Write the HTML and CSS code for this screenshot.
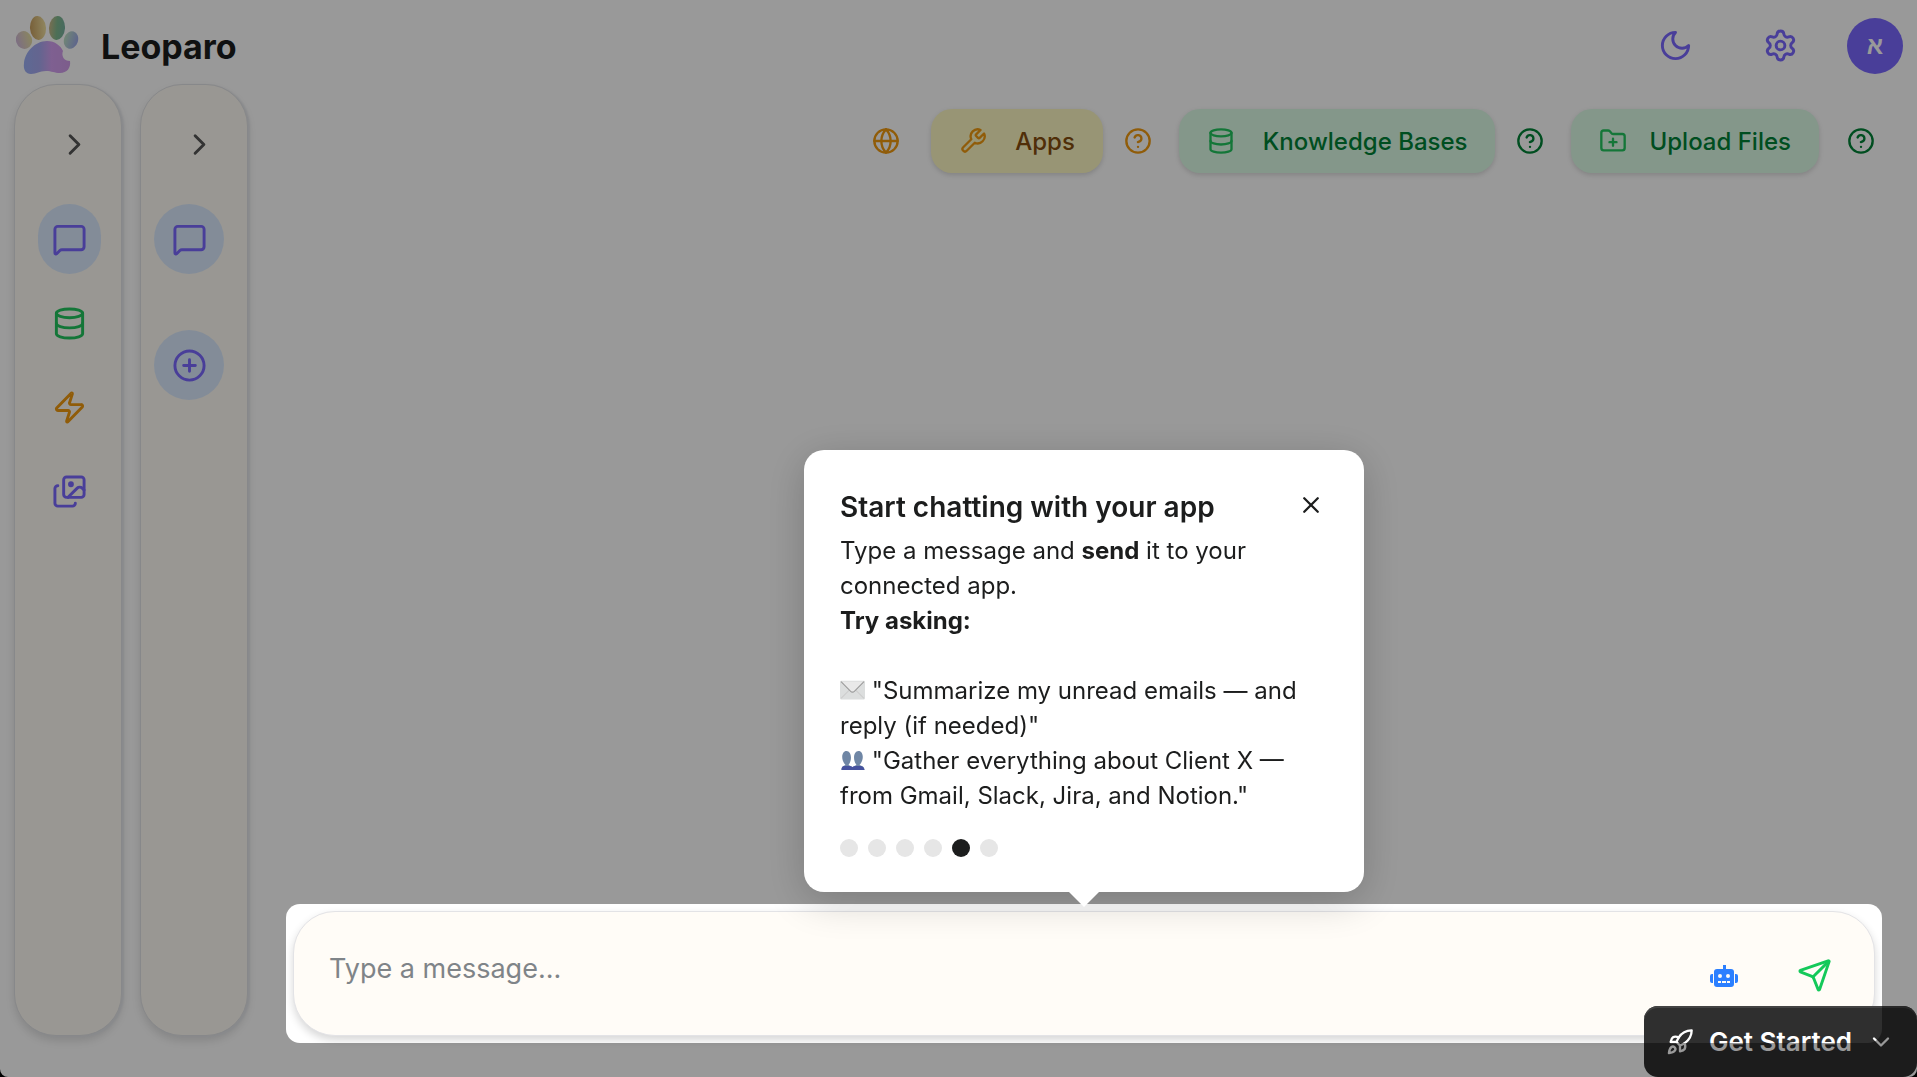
FILE: index.html
```html
<!DOCTYPE html>
<html lang="en">
<head>
<meta charset="utf-8">
<title>Leoparo</title>
<link rel="stylesheet" href="styles.css">
</head>
<body>

<!-- shared icon shapes -->
<svg class="sprite" aria-hidden="true">
	<symbol id="i-chevron" viewBox="0 0 24 24"><path d="m9 18 6-6-6-6"/></symbol>
	<symbol id="i-down" viewBox="0 0 24 24"><path d="m6 9 6 6 6-6"/></symbol>
	<symbol id="i-message" viewBox="0 0 24 24"><path d="M22 17a2 2 0 0 1-2 2H6.828a2 2 0 0 0-1.414.586l-2.202 2.202A.71.71 0 0 1 2 21.286V5a2 2 0 0 1 2-2h16a2 2 0 0 1 2 2z"/></symbol>
	<symbol id="i-database" viewBox="0 0 24 24"><ellipse cx="12" cy="5" rx="9" ry="3"/><path d="M3 5v14a9 3 0 0 0 18 0V5"/><path d="M3 12a9 3 0 0 0 18 0"/></symbol>
	<symbol id="i-zap" viewBox="0 0 24 24"><path d="M4 14a1 1 0 0 1-.78-1.63l9.9-10.2a.5.5 0 0 1 .86.46l-1.92 6.02A1 1 0 0 0 13 10h7a1 1 0 0 1 .78 1.63l-9.9 10.2a.5.5 0 0 1-.86-.46l1.92-6.02A1 1 0 0 0 11 14z"/></symbol>
	<symbol id="i-images" viewBox="0 0 24 24"><path d="m22 11-1.296-1.296a2.4 2.4 0 0 0-3.408 0L11 16"/><path d="M4 8a2 2 0 0 0-2 2v10a2 2 0 0 0 2 2h10a2 2 0 0 0 2-2"/><circle cx="13" cy="7" r="1"/><rect x="8" y="2" width="14" height="14" rx="2"/></symbol>
	<symbol id="i-plus" viewBox="0 0 24 24"><circle cx="12" cy="12" r="10"/><path d="M8 12h8M12 8v8"/></symbol>
	<symbol id="i-globe" viewBox="0 0 24 24"><circle cx="12" cy="12" r="10"/><path d="M12 2a14.5 14.5 0 0 0 0 20 14.5 14.5 0 0 0 0-20M2 12h20"/></symbol>
	<symbol id="i-help" viewBox="0 0 24 24"><circle cx="12" cy="12" r="10"/><path d="M9.09 9a3 3 0 0 1 5.83 1c0 2-3 3-3 3M12 17h.01"/></symbol>
	<symbol id="i-wrench" viewBox="0 0 24 24"><path d="M14.7 6.3a1 1 0 0 0 0 1.4l1.6 1.6a1 1 0 0 0 1.4 0l3.77-3.77a6 6 0 0 1-7.94 7.94l-6.91 6.91a2.12 2.12 0 0 1-3-3l6.91-6.91a6 6 0 0 1 7.94-7.94l-3.76 3.76z"/></symbol>
	<symbol id="i-folder" viewBox="0 0 24 24"><path d="M12 10v6M9 13h6"/><path d="M20 20a2 2 0 0 0 2-2V8a2 2 0 0 0-2-2h-7.9a2 2 0 0 1-1.69-.9L9.6 3.9A2 2 0 0 0 7.93 3H4a2 2 0 0 0-2 2v13a2 2 0 0 0 2 2Z"/></symbol>
	<symbol id="i-moon" viewBox="0 0 24 24"><path d="M12 3a6 6 0 0 0 9 9 9 9 0 1 1-9-9Z"/></symbol>
	<symbol id="i-gear" viewBox="0 0 24 24"><path d="M9.671 4.136a2.34 2.34 0 0 1 4.659 0 2.34 2.34 0 0 0 3.319 1.915 2.34 2.34 0 0 1 2.33 4.033 2.34 2.34 0 0 0 0 3.831 2.34 2.34 0 0 1-2.33 4.033 2.34 2.34 0 0 0-3.319 1.915 2.34 2.34 0 0 1-4.659 0 2.34 2.34 0 0 0-3.32-1.915 2.34 2.34 0 0 1-2.33-4.033 2.34 2.34 0 0 0 0-3.831A2.34 2.34 0 0 1 6.35 6.051a2.34 2.34 0 0 0 3.319-1.915"/><circle cx="12" cy="12" r="3"/></symbol>
	<symbol id="i-send" viewBox="0 0 24 24"><path d="M14.536 21.686a.5.5 0 0 0 .937-.024l6.5-19a.496.496 0 0 0-.635-.635l-19 6.5a.5.5 0 0 0-.024.937l7.93 3.18a2 2 0 0 1 1.112 1.11z"/><path d="m21.854 2.147-10.94 10.939"/></symbol>
	<symbol id="i-rocket" viewBox="0 0 24 24"><path d="M4.5 16.5c-1.5 1.26-2 5-2 5s3.74-.5 5-2c.71-.84.7-2.13-.09-2.91a2.18 2.18 0 0 0-2.91-.09z"/><path d="m12 15-3-3a22 22 0 0 1 2-3.95A12.88 12.88 0 0 1 22 2c0 2.72-.78 7.5-6 11a22.35 22.35 0 0 1-4 2z"/><path d="M9 12H4s.55-3.03 2-4c1.62-1.08 5 0 5 0M12 15v5s3.03-.55 4-2c1.08-1.62 0-5 0-5"/></symbol>
	<symbol id="i-close" viewBox="0 0 24 24"><path d="M3 3l18 18M21 3 3 21"/></symbol>
</svg>

<div class="app">
	<header class="header">
		<svg class="logo" viewBox="0 0 64 60" role="img" aria-label="Leoparo logo">
			<defs>
				<linearGradient id="pad" x1="0" x2="1"><stop offset="0" stop-color="#9bb0f5"/><stop offset=".35" stop-color="#a8a8f0"/><stop offset=".6" stop-color="#d4a0f2"/><stop offset="1" stop-color="#cf9be8"/></linearGradient>
				<linearGradient id="toe1" x1="0" x2="1"><stop offset="0" stop-color="#d0b8da"/><stop offset="1" stop-color="#e6dfa0"/></linearGradient>
				<linearGradient id="toe2" x1="0" x2="1"><stop offset="0" stop-color="#c8a060"/><stop offset="1" stop-color="#f0e0a0"/></linearGradient>
				<linearGradient id="toe3" x1="0" x2="1"><stop offset="0" stop-color="#c8b888"/><stop offset=".5" stop-color="#80ba90"/><stop offset="1" stop-color="#78b0a0"/></linearGradient>
				<linearGradient id="toe4" x1="0" x2="1"><stop offset="0" stop-color="#bce0c4"/><stop offset="1" stop-color="#9ca8ea"/></linearGradient>
			</defs>
			<ellipse cx="8" cy="24" rx="8" ry="9" transform="rotate(-18 8 24)" fill="url(#toe1)"/>
			<ellipse cx="22" cy="12" rx="8" ry="12" transform="rotate(-4 22 12)" fill="url(#toe2)"/>
			<ellipse cx="41" cy="12" rx="8" ry="12" transform="rotate(4 41 12)" fill="url(#toe3)"/>
			<ellipse cx="55" cy="24" rx="7" ry="9" transform="rotate(18 55 24)" fill="url(#toe4)"/>
			<path fill="url(#pad)" d="M31 25c8 0 14 5 16 10-2 5 1 10 7 10 1 7-3 12-10 12-6 0-8-2-14-2-7 0-9 3-15 3-5 0-8-4-7-11C9 36 19 25 31 25z"/>
		</svg>
		<h1 class="brand">Leoparo</h1>
		<div class="header-actions">
			<button class="icon-btn violet" aria-label="Dark mode"><svg class="icon"><use href="#i-moon"/></svg></button>
			<button class="icon-btn violet" aria-label="Settings"><svg class="icon"><use href="#i-gear"/></svg></button>
			<button class="avatar" aria-label="Account">א</button>
		</div>
	</header>

	<div class="layout">
		<nav class="rail rail-sections" aria-label="Sections">
			<button class="rail-toggle" aria-label="Expand"><svg class="icon"><use href="#i-chevron"/></svg></button>
			<button class="rail-btn violet active" aria-label="Chats"><svg class="icon"><use href="#i-message"/></svg></button>
			<button class="rail-btn green" aria-label="Knowledge bases"><svg class="icon"><use href="#i-database"/></svg></button>
			<button class="rail-btn amber" aria-label="Automations"><svg class="icon"><use href="#i-zap"/></svg></button>
			<button class="rail-btn violet" aria-label="Gallery"><svg class="icon"><use href="#i-images"/></svg></button>
		</nav>
		<nav class="rail" aria-label="Conversations">
			<button class="rail-toggle" aria-label="Expand"><svg class="icon"><use href="#i-chevron"/></svg></button>
			<button class="round-btn violet" aria-label="Conversation"><svg class="icon"><use href="#i-message"/></svg></button>
			<button class="round-btn violet" aria-label="New conversation"><svg class="icon"><use href="#i-plus"/></svg></button>
		</nav>

		<main class="main">
			<div class="toolbar">
				<button class="icon-btn amber" aria-label="Web search"><svg class="icon small"><use href="#i-globe"/></svg></button>
				<div class="tool">
					<button class="pill pill-apps"><svg class="icon small"><use href="#i-wrench"/></svg>Apps</button>
					<button class="icon-btn amber" aria-label="About apps"><svg class="icon small"><use href="#i-help"/></svg></button>
				</div>
				<div class="tool">
					<button class="pill pill-green"><svg class="icon small"><use href="#i-database"/></svg>Knowledge Bases</button>
					<button class="icon-btn forest" aria-label="About knowledge bases"><svg class="icon small"><use href="#i-help"/></svg></button>
				</div>
				<div class="tool tool-upload">
					<button class="pill pill-green"><svg class="icon small"><use href="#i-folder"/></svg>Upload Files</button>
					<button class="icon-btn forest" aria-label="About uploads"><svg class="icon small"><use href="#i-help"/></svg></button>
				</div>
			</div>

			<div class="composer-wrap">
				<form class="composer">
					<input class="composer-input" type="text" placeholder="Type a message..." aria-label="Message">
					<button class="icon-btn" type="button" aria-label="Choose agent">
						<svg class="robot" viewBox="0 0 28 22">
							<path fill-rule="evenodd" d="M13 0h3v4h5a3 3 0 0 1 3 3v12a3 3 0 0 1-3 3H7a3 3 0 0 1-3-3V7a3 3 0 0 1 3-3h6zM8 11a2 2 0 1 0 4 0 2 2 0 0 0-4 0zm8 0a2 2 0 1 0 4 0 2 2 0 0 0-4 0zm-8 5v2h3v-2zm4 0v2h4v-2zm5 0v2h3v-2zM3 9v9H2a2 2 0 0 1-2-2v-5a2 2 0 0 1 2-2zm22 0h1a2 2 0 0 1 2 2v5a2 2 0 0 1-2 2h-1z"/>
						</svg>
					</button>
					<button class="icon-btn send" type="submit" aria-label="Send"><svg class="icon"><use href="#i-send"/></svg></button>
				</form>
				<div class="spotlight"></div>

				<section class="tour" role="dialog" aria-labelledby="tour-title">
					<div class="tour-head">
						<h2 id="tour-title">Start chatting with your app</h2>
						<button class="tour-close" aria-label="Close"><svg class="icon"><use href="#i-close"/></svg></button>
					</div>
					<p>Type a message and <b>send</b> it to your connected app.</p>
					<p class="tour-ask"><b>Try asking:</b></p>
					<p><svg class="emoji" viewBox="0 0 24 18" role="img" aria-label="Envelope"><rect width="24" height="18" rx="1" fill="#dcdede"/><path d="M1 17 9 9M23 17l-8-8" stroke="#ccc" fill="none"/><path d="m1 1 9 9q2 2 4 0l9-9" stroke="#9a9a9a" fill="#e9e9e9"/></svg>
					"Summarize my unread emails — and reply (if needed)"</p>
					<p><svg class="emoji" viewBox="0 0 24 20" role="img" aria-label="People"><path d="M1 20c0-4 2-4 4-5-5-5-4-14 1-14s6 9 2 14c2 1 4 1 4 5z" fill="#6f86a5"/><path d="M12 20c0-4 2-4 4-5-4-5-3-14 2-14s6 9 1 14c2 1 5 1 5 5z" fill="#6f86a5"/><path d="M1 20q0-4 3-4h5q2 0 3 1 1-1 3-1h5q3 0 4 4z" fill="#46529e"/></svg>
					"Gather everything about Client X — from Gmail, Slack, Jira, and Notion."</p>
					<div class="dots">
						<span></span><span></span><span></span><span></span><span class="on"></span><span></span>
					</div>
				</section>
			</div>
		</main>
	</div>
</div>

<button class="get-started"><svg class="icon"><use href="#i-rocket"/></svg>Get Started<svg class="icon"><use href="#i-down"/></svg></button>

</body>
</html>
```
FILE: styles.css
```css
* {
	box-sizing: border-box;
}
html {
	background: #000;
}
body {
	margin: 0;
	overflow: hidden;
	font-family: Inter, "Liberation Sans", sans-serif;
	font-size: 24px;
	color: #1c1d1d;
}
button {
	border: 0;
	padding: 0;
	background: none;
	font: inherit;
	color: inherit;
	cursor: pointer;
}
h1, h2, p {
	margin: 0;
}
.sprite {
	position: absolute;
	width: 0;
	height: 0;
}
.icon {
	display: block;
	flex: none;
	width: 35px;
	height: 35px;
	fill: none;
	stroke: currentColor;
	stroke-width: 2;
	stroke-linecap: round;
	stroke-linejoin: round;
}
.icon.small {
	width: 28px;
	height: 28px;
}
.violet { color: #7a68ff; }
.green { color: #22c55e; }
.amber { color: #f09a10; }
.forest { color: #008236; }

.app {
	display: flex;
	flex-direction: column;
	height: 100vh;
	background: #fff;
	border-radius: 0 0 8px 8px;
}

/* header */
.header {
	display: flex;
	align-items: center;
	height: 84px;
	padding: 7px 14px 0 16px;
}
.header-actions {
	display: flex;
	align-items: center;
	margin-left: auto;
}
.header-actions .icon-btn + .icon-btn {
	margin-left: 70px;
}
.logo {
	width: 64px;
	height: 60px;
}
.brand {
	margin-left: 21px;
	padding-top: 3px;
	font-size: 34px;
	line-height: 40px;
	font-weight: 700;
}
.avatar {
	width: 56px;
	height: 56px;
	margin-left: 49px;
	border-radius: 50%;
	background: #7a68ff;
	color: #fff;
	font-size: 24px;
	font-weight: 600;
}

/* side rails */
.layout {
	display: flex;
	flex: 1;
	gap: 18px;
	min-height: 0;
	padding: 0 42px 41px 14px;
}
.rail {
	display: flex;
	flex-direction: column;
	align-items: center;
	gap: 14px;
	width: 108px;
	padding-top: 42px;
	border: 1px solid #e2e3e6;
	border-radius: 42px;
	background: #fffcf5;
	box-shadow: 2px 1px 2px #e4e6ea, 0 5px 8px rgba(0, 0, 0, .12);
}
.rail-sections {
	padding-left: 2px;
}
.rail-toggle {
	margin: 0 0 28px 10px;
	color: #555;
}
.rail-btn,
.round-btn {
	display: flex;
	align-items: center;
	justify-content: center;
	width: 63px;
	height: 70px;
	border-radius: 35px;
}
.round-btn {
	width: 70px;
	margin-right: 10px;
}
.rail-btn.active,
.round-btn {
	background: #dbeafe;
}
.round-btn + .round-btn {
	margin-top: 42px;
}

/* toolbar */
.main {
	display: flex;
	flex-direction: column;
	justify-content: space-between;
	flex: 1;
	margin-left: 27px;
}
.toolbar {
	display: flex;
	align-items: center;
	justify-content: flex-end;
	gap: 27px;
	padding-top: 25px;
}
.toolbar > .icon-btn {
	margin-right: 4px;
}
.tool {
	display: flex;
	align-items: center;
	gap: 21px;
}
.tool-upload {
	gap: 28px;
}
.pill {
	display: flex;
	align-items: center;
	gap: 28px;
	height: 64px;
	padding: 0 28px;
	border-radius: 21px;
	font-weight: 500;
	box-shadow: 0 2px 5px rgba(0, 0, 0, .15);
}
.tool-upload .pill {
	gap: 22px;
}
.pill-apps {
	background: #fef9c3;
	color: #854d0e;
}
.pill-apps .icon {
	color: #f09a10;
}
.pill-green {
	background: #dcfce7;
	color: #008236;
}
.pill-green .icon {
	color: #22c55e;
}

/* message box */
.composer-wrap {
	position: relative;
}
.composer {
	display: flex;
	align-items: center;
	height: 125px;
	padding: 4px 42px 0 35px;
	border: 1px solid #e3e3e6;
	border-radius: 42px;
	background: #fffcf7;
	box-shadow: 0 4px 8px rgba(0, 0, 0, .16);
}
.composer-input {
	flex: 1;
	min-width: 0;
	height: 56px;
	margin-bottom: 14px;
	padding: 0;
	border: 0;
	outline: 0;
	background: none;
	font: inherit;
	font-size: 27px;
}
.composer-input::placeholder {
	color: #7f8488;
}
.robot {
	display: block;
	width: 28px;
	height: 22px;
	fill: #2b7fff;
}
.send {
	margin-left: 59px;
	color: #14c95a;
}

/* dims the page round the highlighted element */
.spotlight {
	position: absolute;
	inset: -7px;
	z-index: 10;
	border-radius: 14px;
	box-shadow: 0 0 0 3000px rgba(0, 0, 0, .4);
	pointer-events: none;
}
.tour {
	position: absolute;
	z-index: 20;
	bottom: calc(100% + 19px);
	left: 50%;
	width: 560px;
	padding: 36px 36px 35px;
	border-radius: 20px;
	background: #fff;
	line-height: 35px;
	box-shadow: 0 8px 40px rgba(0, 0, 0, .2);
	transform: translateX(-50%);
}
.tour::after {
	content: "";
	position: absolute;
	top: 100%;
	left: 50%;
	margin-left: -15px;
	border: 15px solid transparent;
	border-top-color: #fff;
	border-bottom: 0;
}
.tour-head {
	display: flex;
	align-items: center;
	justify-content: space-between;
	padding-right: 8px;
	margin-bottom: 5px;
}
.tour-head h2 {
	font-size: 28px;
	line-height: 42px;
	font-weight: 600;
}
.tour-close .icon {
	width: 18px;
	height: 18px;
	margin-bottom: 4px;
	stroke-width: 3;
}
.tour-ask {
	margin-bottom: 35px;
}
.emoji {
	width: 25px;
	height: 20px;
	vertical-align: -1px;
}
.dots {
	display: flex;
	gap: 10px;
	margin-top: 26px;
}
.dots span {
	width: 18px;
	height: 18px;
	border-radius: 50%;
	background: #e6e6e6;
}
.dots .on {
	background: #1c1d1d;
}

.get-started {
	position: fixed;
	right: 0;
	bottom: 0;
	display: flex;
	align-items: center;
	gap: 15px;
	height: 71px;
	padding: 0 22px;
	border-radius: 14px;
	background: #2f2f2f;
	color: #fff;
	font-size: 26px;
	font-weight: 600;
	box-shadow: inset 0 2px 0 #444;
}
.get-started .icon {
	width: 28px;
	height: 28px;
}
```
